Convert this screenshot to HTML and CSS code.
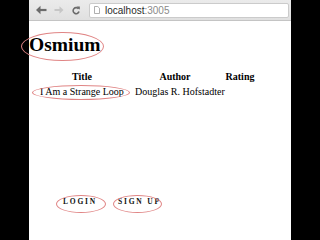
FILE: index.html
```html
<!DOCTYPE html>
<html lang="en">
<head>
    <meta charset="UTF-8">
    <meta name="viewport" content="width=device-width, initial-scale=1.0">
    <title>Osmium</title>
    <link rel="stylesheet" href="styles.css">
</head>
<body>
    <div class="screen">
        <div class="bezel"></div>
        <div class="window">
            <div class="toolbar">
                <svg class="nav back" width="12" height="10" viewBox="0 0 12 10">
                    <path d="M1 5 L5.5 0.8 L5.5 9.2 Z" fill="#6b6b6b"/>
                    <path d="M4 5 H11.5" stroke="#6b6b6b" stroke-width="2.2"/>
                </svg>
                <svg class="nav forward" width="10" height="10" viewBox="0 0 10 10">
                    <path d="M9.5 5 L5.5 1.2 L5.5 8.8 Z" fill="#c6c6c6"/>
                    <path d="M0.5 5 H6.5" stroke="#c6c6c6" stroke-width="2"/>
                </svg>
                <svg class="nav reload" width="8" height="9" viewBox="0 0 9 10">
                    <path d="M7.4 3.2 A3.4 3.4 0 1 0 7.9 6.2" stroke="#6b6b6b" stroke-width="1.8" fill="none"/>
                    <path d="M5.2 0.6 L8.8 0.6 L8.8 4.2 Z" fill="#6b6b6b"/>
                </svg>
                <div class="address">
                    <svg class="doc" width="6" height="8" viewBox="0 0 6 8">
                        <path d="M0.5 0.5 H3.8 L5.5 2.2 V7.5 H0.5 Z" fill="#fff" stroke="#9a9a9a" stroke-width="0.8"/>
                    </svg>
                    <span class="host">localhost</span><span class="port">:3005</span>
                </div>
            </div>
            <div class="page">
                <h1 class="logo circled">Osmium</h1>
                <table class="books">
                    <colgroup>
                        <col class="col-title">
                        <col class="col-author">
                        <col class="col-rating">
                    </colgroup>
                    <thead>
                        <tr>
                            <th>Title</th>
                            <th>Author</th>
                            <th>Rating</th>
                        </tr>
                    </thead>
                    <tbody>
                        <tr>
                            <td><span class="book-title circled">I Am a Strange Loop</span></td>
                            <td>Douglas R. Hofstadter</td>
                            <td></td>
                        </tr>
                    </tbody>
                </table>
                <div class="auth">
                    <a class="auth-link login circled">LOGIN</a>
                    <a class="auth-link signup circled">SIGN UP</a>
                </div>
            </div>
        </div>
        <div class="bezel"></div>
    </div>
</body>
</html>
```

FILE: styles.css
```css
* {
    box-sizing: border-box;
}

body {
    margin: 0;
    width: 320px;
    height: 240px;
    overflow: hidden;
    background-color: #000;
    font-family: "Liberation Serif", "Times New Roman", serif;
}

.screen {
    display: flex;
    height: 240px;
}

.bezel {
    width: 29px;
    flex-shrink: 0;
    background-color: #000;
}

.window {
    width: 262px;
    background-color: #fff;
    display: flex;
    flex-direction: column;
}

/* browser chrome */
.toolbar {
    height: 21px;
    display: flex;
    align-items: center;
    padding: 0 2px 0 6px;
    background: linear-gradient(#ebebeb, #e0e0e0);
    border-bottom: 1px solid #c4c4c4;
}

.back {
    margin-right: 7px;
}

.forward {
    margin-right: 8px;
}

.reload {
    margin-right: 9px;
}

.address {
    flex: 1;
    height: 15px;
    display: flex;
    align-items: center;
    padding-left: 4px;
    background-color: #fff;
    border: 1px solid #cbcbcb;
    border-radius: 2px;
    font-family: "Liberation Sans", Arial, sans-serif;
    font-size: 10px;
}

.doc {
    margin-right: 5px;
}

.host {
    color: #2a2a2a;
}

.port {
    color: #8a8a8a;
}

/* page */
.page {
    flex: 1;
    color: #000;
}

.circled {
    position: relative;
}

.circled::after {
    content: "";
    position: absolute;
    border: 1px solid #e08585;
    border-radius: 50%;
}

.logo {
    width: max-content;
    margin: 14px 0 0 0;
    font-size: 19.5px;
    line-height: 20px;
    font-weight: bold;
}

.logo::after {
    left: -8px;
    right: -3px;
    top: -3px;
    bottom: -6px;
}

.books {
    margin: 14px 0 0 6px;
    width: 224px;
    table-layout: fixed;
    border-collapse: collapse;
    font-size: 10px;
    line-height: 13px;
}

.col-title {
    width: 94px;
}

.col-author {
    width: 92px;
}

.col-rating {
    width: 38px;
}

.books th {
    padding: 1px 0;
    text-align: center;
    font-weight: bold;
}

.books td {
    padding: 1px 0 1px 5px;
    text-align: left;
    white-space: nowrap;
}

.books td + td {
    padding-left: 6px;
}

.book-title {
    display: inline-block;
}

.book-title::after {
    left: -8px;
    right: -6px;
    top: 0;
    bottom: -2px;
}

.auth {
    display: flex;
    gap: 21px;
    margin-top: 98px;
    padding-left: 34px;
}

.auth-link {
    font-size: 7.5px;
    line-height: 10px;
    font-weight: bold;
    letter-spacing: 1.8px;
    color: #111;
    cursor: pointer;
}

.login::after {
    left: -7px;
    right: -9px;
    top: -2px;
    bottom: -6px;
}

.signup::after {
    left: -5px;
    right: -1px;
    top: -2px;
    bottom: -6px;
}
```
